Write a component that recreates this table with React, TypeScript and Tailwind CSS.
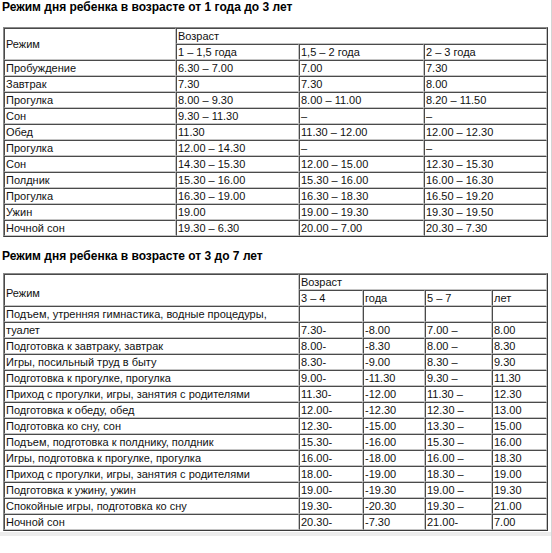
import React from 'react';

const cell =
  'h-[16px] px-px py-0 align-middle text-left text-[11px] leading-[13px] font-normal text-[#111] whitespace-nowrap overflow-hidden border border-t-[#4a4a4a] border-l-[#4a4a4a] border-b-[#c4c4c4] border-r-[#c4c4c4]';

const young: string[][] = [
  ['Пробуждение', '6.30 – 7.00', '7.00', '7.30'],
  ['Завтрак', '7.30', '7.30', '8.00'],
  ['Прогулка', '8.00 – 9.30', '8.00 – 11.00', '8.20 – 11.50'],
  ['Сон', '9.30 – 11.30', '–', '–'],
  ['Обед', '11.30', '11.30 – 12.00', '12.00 – 12.30'],
  ['Прогулка', '12.00 – 14.30', '–', '–'],
  ['Сон', '14.30 – 15.30', '12.00 – 15.00', '12.30 – 15.30'],
  ['Полдник', '15.30 – 16.00', '15.30 – 16.00', '16.00 – 16.30'],
  ['Прогулка', '16.30 – 19.00', '16.30 – 18.30', '16.50 – 19.20'],
  ['Ужин', '19.00', '19.00 – 19.30', '19.30 – 19.50'],
  ['Ночной сон', '19.30 – 6.30', '20.00 – 7.00', '20.30 – 7.30'],
];

const older: string[][] = [
  ['Подъем, утренняя гимнастика, водные процедуры,', '', '', '', ''],
  ['туалет', '7.30-', '-8.00', '7.00 –', '8.00'],
  ['Подготовка к завтраку, завтрак', '8.00-', '-8.30', '8.00 –', '8.30'],
  ['Игры, посильный труд в быту', '8.30-', '-9.00', '8.30 –', '9.30'],
  ['Подготовка к прогулке, прогулка', '9.00-', '-11.30', '9.30 –', '11.30'],
  ['Приход с прогулки, игры, занятия с родителями', '11.30-', '-12.00', '11.30 –', '12.30'],
  ['Подготовка к обеду, обед', '12.00-', '-12.30', '12.30 –', '13.00'],
  ['Подготовка ко сну, сон', '12.30-', '-15.00', '13.30 –', '15.00'],
  ['Подъем, подготовка к полднику, полдник', '15.30-', '-16.00', '15.30 –', '16.00'],
  ['Игры, подготовка к прогулке, прогулка', '16.00-', '-18.00', '16.00 –', '18.30'],
  ['Приход с прогулки, игры, занятия с родителями', '18.00-', '-19.00', '18.30 –', '19.00'],
  ['Подготовка к ужину, ужин', '19.00-', '-19.30', '19.00 –', '19.30'],
  ['Спокойные игры, подготовка ко сну', '19.30-', '-20.30', '19.30 –', '21.00'],
  ['Ночной сон', '20.30-', '-7.30', '21.00-', '7.00'],
];

const App: React.FC = () => {
  return (
    <div className="w-[552px] h-[553px] bg-white text-black text-[12px] leading-[14px] font-['Liberation_Sans',Arial,sans-serif] border-r border-[#d4d4d4] overflow-hidden">
      <h2 className="pl-[2px] font-bold text-[12px] leading-[14px] mb-[13px]">
        Режим дня ребенка в возрасте от 1 года до 3 лет
      </h2>

      <table className="ml-[3px] w-[545px] table-fixed border-separate border-spacing-0 border border-t-[#8a8a8a] border-l-[#8a8a8a] border-b-[#3a3a3a] border-r-[#3a3a3a]">
        <colgroup>
          <col className="w-[172px]" />
          <col className="w-[123px]" />
          <col className="w-[125px]" />
          <col className="w-[123px]" />
        </colgroup>
        <tbody>
          <tr>
            <th rowSpan={2} className={cell}>
              Режим
            </th>
            <th colSpan={3} className={cell}>
              Возраст
            </th>
          </tr>
          <tr>
            <th className={cell}>1 – 1,5 года</th>
            <th className={cell}>1,5 – 2 года</th>
            <th className={cell}>2 – 3 года</th>
          </tr>
          {young.map((row, i) => (
            <tr key={i}>
              {row.map((v, j) => (
                <td key={j} className={cell}>
                  {v}
                </td>
              ))}
            </tr>
          ))}
        </tbody>
      </table>

      <h2 className="pl-[2px] font-bold text-[12px] leading-[14px] mt-[12px] mb-[10px]">
        Режим дня ребенка в возрасте от 3 до 7 лет
      </h2>

      <table className="ml-[3px] w-[545px] table-fixed border-separate border-spacing-0 border border-t-[#8a8a8a] border-l-[#8a8a8a] border-b-[#3a3a3a] border-r-[#3a3a3a]">
        <colgroup>
          <col className="w-[295px]" />
          <col className="w-[64px]" />
          <col className="w-[62px]" />
          <col className="w-[67px]" />
          <col className="w-[55px]" />
        </colgroup>
        <tbody>
          <tr>
            <th rowSpan={2} className={`${cell} pt-[6px]`}>
              Режим
            </th>
            <th colSpan={4} className={cell}>
              Возраст
            </th>
          </tr>
          <tr>
            <th className={cell}>3 – 4</th>
            <th className={cell}>года</th>
            <th className={cell}>5 – 7</th>
            <th className={cell}>лет</th>
          </tr>
          {older.map((row, i) => (
            <tr key={i}>
              {row.map((v, j) => (
                <td key={j} className={cell}>
                  {v}
                </td>
              ))}
            </tr>
          ))}
        </tbody>
      </table>
      <div className="mt-px h-[4px] bg-[#ececec]" />
    </div>
  );
};

export default App;
